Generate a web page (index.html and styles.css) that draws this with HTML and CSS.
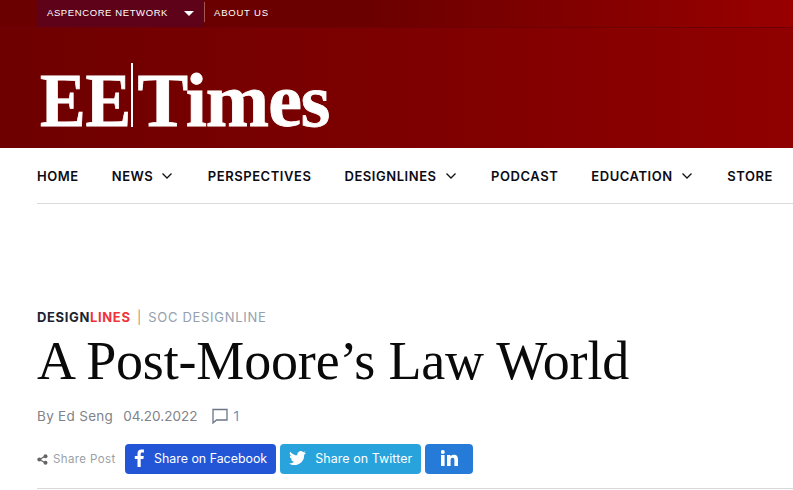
FILE: index.html
```html
<!DOCTYPE html>
<html lang="en">
  <head>
    <meta charset="UTF-8" />
    <title>A Post-Moore's Law World</title>
    <link rel="stylesheet" href="styles.css">
  </head>
  <body>
    <header>
      <div class="top-bar">
        <div class="network">ASPENCORE NETWORK <span class="arrow"></span></div>
        <div class="about">ABOUT US</div>
      </div>
      <div class="logo">
        <span class="ee">EE</span><span class="logo-line"></span><span class="times">Times</span>
      </div>
    </header>
    <nav>
      <a href="#">HOME</a>
      <a href="#" class="drop">NEWS
        <svg width="12" height="8" viewBox="0 0 12 8"><path d="M1.500 1.500 6 6l4.500-4.500" fill="none" stroke="#111" stroke-width="1.300"/></svg>
      </a>
      <a href="#">PERSPECTIVES</a>
      <a href="#" class="drop">DESIGNLINES
        <svg width="12" height="8" viewBox="0 0 12 8"><path d="M1.500 1.500 6 6l4.500-4.500" fill="none" stroke="#111" stroke-width="1.300"/></svg>
      </a>
      <a href="#">PODCAST</a>
      <a href="#" class="drop">EDUCATION
        <svg width="12" height="8" viewBox="0 0 12 8"><path d="M1.500 1.500 6 6l4.500-4.500" fill="none" stroke="#111" stroke-width="1.300"/></svg>
      </a>
      <a href="#">STORE</a>
    </nav>
    <main>
      <div class="crumbs">
        <span class="design">DESIGN</span><span class="lines">LINES</span>
        <span class="sep">|</span>
        <span class="soc">SOC DESIGNLINE</span>
      </div>
      <h1>A Post-Moore’s Law World</h1>
      <div class="meta">
        <span class="author">By Ed Seng</span>
        <span>04.20.2022</span>
        <span class="comments">
          <svg width="16" height="16" viewBox="0 0 16 16"><path d="M1 1.500h14v10.500H4.500L1 15z" fill="none" stroke="#6b7686" stroke-width="1.300"/></svg>
          <span class="count">1</span>
        </span>
      </div>
      <div class="share">
        <span class="share-label">
          <svg width="11" height="11" viewBox="0 0 11 11"><path d="M8.500 2 2.500 5.500l6 3.500" fill="none" stroke="#666" stroke-width="1.200"/><circle cx="8.500" cy="2.200" r="2" fill="#666"/><circle cx="2.300" cy="5.500" r="2" fill="#666"/><circle cx="8.500" cy="8.800" r="2" fill="#666"/></svg>
          Share Post
        </span>
        <a href="#" class="btn fb">
          <svg width="12" height="18" viewBox="0 0 12 18"><path d="M3.500 18V10H.8V6.900h2.700V4.600C3.500 1.900 5.100.5 7.500.5c1.100 0 2.100.1 2.400.1v2.800H8.200c-1.300 0-1.500.6-1.500 1.500v2h3.100l-.4 3.100H6.700v8z" fill="#fff"/></svg>
          Share on Facebook
        </a>
        <a href="#" class="btn tw">
          <svg width="17" height="14" viewBox="0 0 24 20"><path d="M24 2.400c-.9.400-1.800.7-2.800.8 1-.6 1.800-1.600 2.200-2.700-1 .6-2 1-3.100 1.200A4.900 4.900 0 0 0 11.900 6.200C7.800 6 4.200 4 1.700.9.300 3.100 1 6 3.200 7.500c-.8 0-1.600-.2-2.200-.6 0 2.300 1.600 4.400 3.900 4.900-.7.200-1.500.2-2.200.1.600 2 2.400 3.400 4.600 3.400A9.900 9.900 0 0 1 0 17.800 13.900 13.900 0 0 0 21.500 5.400c1-.7 1.800-1.600 2.500-3z" fill="#fff"/></svg>
          Share on Twitter
        </a>
        <a href="#" class="btn li">
          <svg width="17" height="16" viewBox="0 0 17 16"><rect x="0" y="5" width="3.600" height="11" fill="#fff"/><circle cx="1.800" cy="2" r="2" fill="#fff"/><path d="M6 5h3.400v1.500c.6-1 1.800-1.800 3.400-1.800 3.200 0 4.200 2 4.200 5V16h-3.600v-5.500c0-1.400-.3-2.700-1.800-2.700s-2 1.200-2 2.600V16H6z" fill="#fff"/></svg>
        </a>
      </div>
    </main>
  </body>
</html>
```

FILE: styles.css
```css
* {
  padding: 0;
  margin: 0;
  box-sizing: border-box;
}
body {
  font-family: 'Inter', sans-serif;
  background: #fff;
  overflow: hidden;
}
a {
  text-decoration: none;
}
header {
  height: 148px;
  background: linear-gradient(90deg, #6e0000 0%, #7d0000 50%, #900000 100%);
}
.top-bar {
  height: 28px;
  padding-left: 37px;
  display: flex;
  background: linear-gradient(90deg, #6a0000 0%, #6a0000 45%, #990000 100%);
  border-bottom: 1px solid #700008;
  font-family: 'Liberation Sans', sans-serif;
  font-size: 9.500px;
  letter-spacing: .8px;
  color: #fff;
}
.network {
  width: 167px;
  padding: 7px 0 0 10px;
  background: #5d0219;
  letter-spacing: .6px;
  display: flex;
  gap: 16px;
  align-items: flex-start;
}
.arrow {
  margin-top: 4px;
  border-left: 5px solid transparent;
  border-right: 5px solid transparent;
  border-top: 5px solid #fff;
}
.about {
  margin: 2px 0 0 0;
  height: 20px;
  padding: 5px 0 0 9px;
  border-left: 1px solid #a5564f;
}
.logo {
  margin: 35px 0 0 40px;
  height: 64px;
  display: flex;
  align-items: flex-end;
  font-family: 'Liberation Serif', serif;
  font-weight: 700;
  color: #fff;
  font-size: 76px;
  line-height: 64px;
  -webkit-text-stroke: .8px #fff;
}
.ee {
  display: inline-block;
  transform: scaleX(.9);
  transform-origin: left;
  margin-right: -10px;
  position: relative;
  top: 5px;
}
.times {
  letter-spacing: -1px;
  position: relative;
  top: 5px;
}
.logo-line {
  width: 2px;
  height: 64px;
  margin: 0 4px 0 0;
  background: #fff;
}
nav {
  height: 56px;
  margin-left: 37px;
  display: flex;
  align-items: center;
  gap: 33px;
  border-bottom: 1px solid #d9d9d9;
  font-size: 13px;
  font-weight: 600;
  letter-spacing: .55px;
  white-space: nowrap;
}
nav a {
  color: #0b0b14;
}
.drop {
  display: flex;
  align-items: center;
  gap: 8px;
}
.drop svg {
  margin-right: 1.500px;
}
main {
  padding: 105px 0 0 37px;
}
.crumbs {
  font-size: 13px;
  letter-spacing: .65px;
  line-height: 16px;
}
.design {
  font-weight: 700;
  color: #1c2431;
}
.lines {
  font-weight: 700;
  color: #f0333a;
}
.sep {
  color: #b8927c;
  margin: 0 2px;
}
.soc {
  color: #95a0ae;
  letter-spacing: .7px;
}
h1 {
  font-family: 'Liberation Serif', serif;
  font-weight: 400;
  font-size: 54px;
  line-height: 60px;
  letter-spacing: -.17px;
  color: #0a0a0a;
  margin-top: 6px;
}
.meta {
  margin-top: 15px;
  display: flex;
  align-items: center;
  gap: 10px;
  font-size: 13.500px;
  color: #80838a;
  height: 20px;
}
.author {
  letter-spacing: .3px;
}
.comments {
  margin-left: 5px;
  display: flex;
  align-items: center;
  gap: 5px;
}
.count {
  color: #6f8fc0;
}
.share {
  margin-top: 18px;
  display: flex;
  align-items: center;
  gap: 4px;
  padding-bottom: 14px;
  margin-right: -20px;
  border-bottom: 1px solid #d9d9d9;
}
.share-label {
  display: flex;
  align-items: center;
  gap: 5px;
  font-size: 11.500px;
  letter-spacing: .4px;
  color: #9a9fa6;
  width: 84px;
  white-space: nowrap;
}
.btn {
  height: 30px;
  display: flex;
  align-items: center;
  gap: 8px;
  padding: 0 9px 2px;
  border-radius: 4px;
  color: #fff;
  font-size: 12.400px;
}
.fb {
  background: #2356d6;
}
.tw {
  background: #29a3dc;
  gap: 9px;
  letter-spacing: .1px;
}
.li {
  background: #277bd8;
  width: 48px;
  justify-content: center;
}
```
